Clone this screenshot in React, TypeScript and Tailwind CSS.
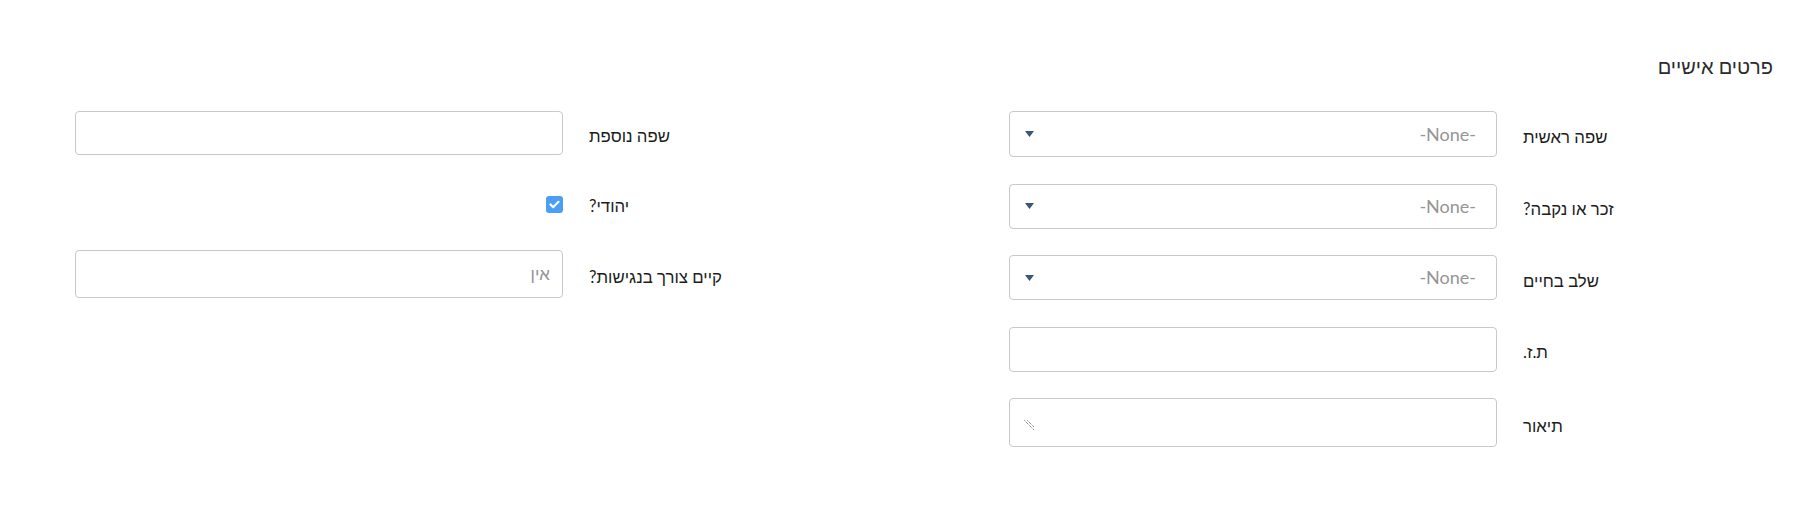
import type { ReactNode } from 'react'

const font = "font-['Lato','Liberation_Sans',sans-serif]"

function Caret() {
  return (
    <svg width="9" height="6" viewBox="0 0 9 6" className="shrink-0">
      <path d="M0 0h9L4.5 6z" fill="#3b5673" />
    </svg>
  )
}

function Row({ label, h, children }: { label: string; h: string; children: ReactNode }) {
  return (
    <div className={`flex items-center gap-[26px] ${h}`}>
      <label className="w-[250px] shrink-0 text-left text-[16.8px] leading-[20px] text-[#1c1c1c] mt-[6px]">{label}</label>
      <div className="w-[488px] h-full shrink-0">{children}</div>
    </div>
  )
}

function Picklist() {
  return (
    <div className="h-full flex items-center justify-between border border-[#c9c9c9] rounded-[4px] pr-[20px] pl-[15px] bg-white">
      <span className="text-[18px] text-[#959595]">-None-</span>
      <Caret />
    </div>
  )
}

function TextBox({ value }: { value?: string }) {
  return (
    <div className="h-full flex items-center border border-[#c9c9c9] rounded-[4px] pr-[12px] bg-white">
      {value && <span className="text-[17px] text-[#959595]">{value}</span>}
    </div>
  )
}

export default function App() {
  return (
    <div dir="rtl" className={`min-h-screen bg-white ${font} pt-[52px] pr-[30px] pl-[75px]`}>
      <h1 className="text-[20px] leading-[28px] text-[#2b2b2b] mb-[31px]">פרטים אישיים</h1>

      <div className="flex justify-between">
        <div className="flex flex-col gap-[26.5px]">
          <Row label="שפה ראשית" h="h-[46px]"><Picklist /></Row>
          <Row label="זכר או נקבה?" h="h-[45px]"><Picklist /></Row>
          <Row label="שלב בחיים" h="h-[45px]"><Picklist /></Row>
          <Row label="ת.ז." h="h-[45px]"><TextBox /></Row>
          <Row label="תיאור" h="h-[49px]">
            <div className="h-full border border-[#c9c9c9] rounded-[4px] bg-white flex items-start justify-end pl-[14px] pt-[21px]">
              <svg width="11" height="11" viewBox="0 0 11 11">
                <path d="M0.5 0.5L10.5 10.5M3.5 0.5L10.5 7.5" stroke="#555" strokeWidth="1" strokeDasharray="1 1" />
              </svg>
            </div>
          </Row>
        </div>

        <div className="flex flex-col gap-[26.5px]">
          <Row label="שפה נוספת" h="h-[44px]"><TextBox /></Row>
          <Row label="יהודי?" h="h-[42px]">
            <div className="h-full flex items-center pt-[3px]">
              <span className="w-[17px] h-[17px] rounded-[3px] bg-[#4a9ff5] flex items-center justify-center">
                <svg width="11" height="9" viewBox="0 0 11 9">
                  <path d="M1.5 4.5L4.2 7.2L9.5 1.8" stroke="white" strokeWidth="2.2" fill="none" strokeLinecap="round" strokeLinejoin="round" />
                </svg>
              </span>
            </div>
          </Row>
          <Row label="קיים צורך בנגישות?" h="h-[48px]"><TextBox value="אין" /></Row>
        </div>
      </div>
    </div>
  )
}
